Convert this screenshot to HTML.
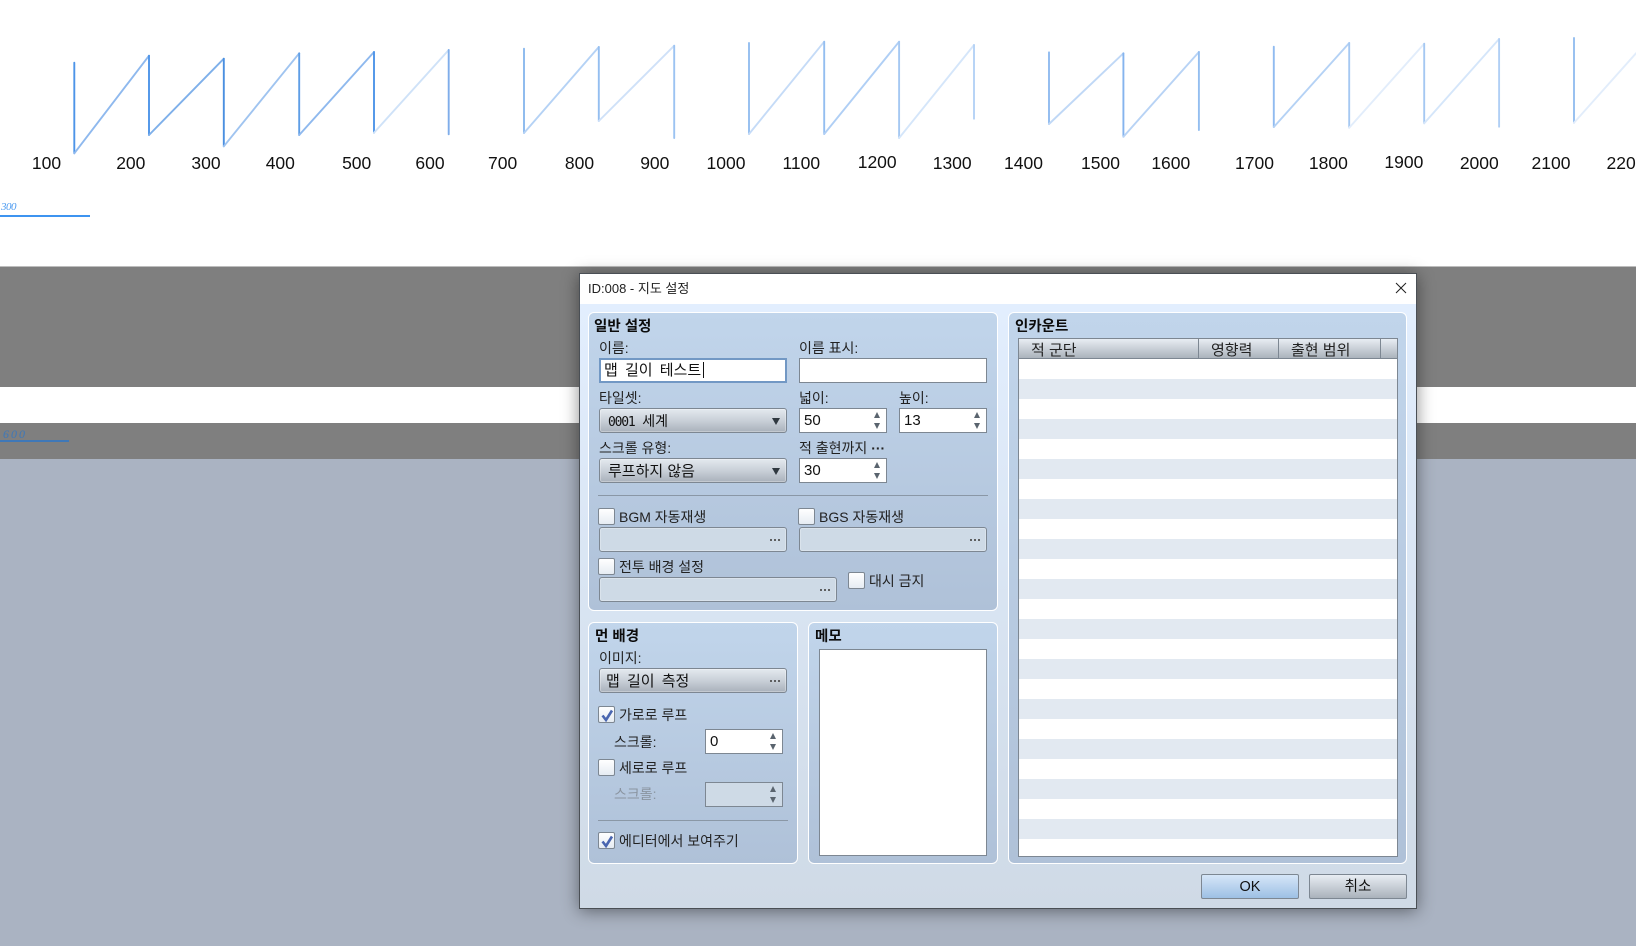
<!DOCTYPE html>
<html lang="ko"><head><meta charset="utf-8"><title>ID:008 - 지도 설정</title>
<style>
html,body{margin:0;padding:0}
body{width:1636px;height:946px;overflow:hidden;position:relative;background:#fff;font-family:"Liberation Sans","Noto Sans CJK KR",sans-serif;color:#1c1c1c}
div,span,svg{box-sizing:border-box}
.a{position:absolute}
.n{position:absolute;font-size:17.5px;line-height:20px;height:20px;width:60px;text-align:center;color:#111;filter:blur(.25px)}
.t{position:absolute;font-size:14px;line-height:20px;height:20px;white-space:nowrap;color:#222}
.b{font-weight:700;font-size:14.5px;color:#0c0c0c}
.p{position:absolute;border:1px solid #fff;border-radius:6px;background:linear-gradient(#c1d5eb,#afc1d8);overflow:hidden}
.i{position:absolute;background:#fff;border:1px solid #7d8792;height:25px}
.c{position:absolute;height:25px;border:1px solid #7d8792;border-radius:3px;background:linear-gradient(#e4e9ef 0,#c9d0d8 50%,#a9b1bb 100%);box-shadow:inset 0 0 0 1px rgba(255,255,255,.3)}
.f{position:absolute;height:25px;border:1px solid #7d8792;border-radius:3px;background:#cedae6;box-shadow:inset 0 0 0 1px rgba(255,255,255,.25)}
.cb{position:absolute;width:17px;height:17px;border:1px solid #7d8792;border-radius:2px;background:linear-gradient(#fff,#e6ecf3)}
.cb svg{position:absolute;left:1px;top:1px}
.up,.dn,.ar{position:absolute;width:0;height:0;border-left:3.5px solid transparent;border-right:3.5px solid transparent}
.up{border-bottom:6px solid #5a646e}
.dn{border-top:6px solid #5a646e}
.ar{border-left-width:4px;border-right-width:4px;border-top:7px solid #2f3840}
.d{position:absolute;width:10px;height:2px;background:radial-gradient(circle at 1px 1px,#555 1px,transparent 1.2px) 0 0/4px 2px repeat-x}
.sep{position:absolute;height:1px;background:#8a97a6}
.h{position:absolute;top:0;height:100%;width:1px;background:#7d8792}
.btn{position:absolute;height:25px;border:1px solid #7d8792;border-radius:2px;text-align:center;line-height:25px;font-size:14.5px;color:#111}
</style></head><body>
<svg class="a" style="left:0;top:0;filter:blur(.3px)" width="1636" height="266" fill="none" stroke-linecap="round">
<g stroke-width="1.9">
<path stroke="#4d94e8" d="M74.3 62.7V153.3"/><path stroke="#8fb9ee" d="M74.3 153.3L149 55.7"/>
<path stroke="#4d94e8" d="M149 55.7V135"/><path stroke="#7fb0ea" d="M149 135L223.8 58.7"/>
<path stroke="#4a8fe0" d="M223.8 58.7V146.3"/><path stroke="#a0c4f0" d="M223.8 146.3L299.2 53.3"/>
<path stroke="#5f9ee6" d="M299.2 53.3V135"/><path stroke="#8fb9ee" d="M299.2 135L374 52"/>
<path stroke="#4d94e8" d="M374 52V132.7"/><path stroke="#cfe2f8" d="M374 132.7L448.7 50"/>
<path stroke="#7fadea" d="M448.7 50V134.3"/>
<path stroke="#8ab8ee" d="M524 48.7V133"/><path stroke="#b5d2f5" d="M524 133L598.8 47"/>
<path stroke="#94bef0" d="M598.8 47V121"/><path stroke="#cfe1f8" d="M598.8 121L674.2 45.7"/>
<path stroke="#9cc3f2" d="M674.2 45.7V138"/>
<path stroke="#94bef0" d="M749 43V134"/><path stroke="#c5dbf7" d="M749 134L824.2 41.7"/>
<path stroke="#94bef0" d="M824.2 41.7V134"/><path stroke="#b0cff5" d="M824.2 134L899.1 41.7"/>
<path stroke="#a5c8f2" d="M899.1 41.7V138"/><path stroke="#d5e6fa" d="M899.1 138L974 45"/>
<path stroke="#b5d2f5" d="M974 45V118.7"/>
<path stroke="#90bbf0" d="M1049 52.3V124"/><path stroke="#c0d8f6" d="M1049 124L1123.4 53.3"/>
<path stroke="#85b4ee" d="M1123.4 53.3V136.7"/><path stroke="#b8d3f5" d="M1123.4 136.7L1198.9 52"/>
<path stroke="#94bef0" d="M1198.9 52V130"/>
<path stroke="#90bbf0" d="M1273.8 46.7V127"/><path stroke="#b5d2f5" d="M1273.8 127L1349.2 43"/>
<path stroke="#a5c8f2" d="M1349.2 43V127.7"/><path stroke="#e2edfb" d="M1349.2 127.7L1424.2 43.7"/>
<path stroke="#a5c8f2" d="M1424.2 43.7V123.3"/><path stroke="#d5e6fa" d="M1424.2 123.3L1499.1 39"/>
<path stroke="#b0cff5" d="M1499.1 39V126.7"/>
<path stroke="#94bef0" d="M1574 38V122.7"/><path stroke="#e2edfb" d="M1574 122.7L1636 53.3"/>
</g></svg>
<div class="n" style="left:16.5px;top:153px">100</div><div class="n" style="left:100.8px;top:153px">200</div><div class="n" style="left:176px;top:153px">300</div><div class="n" style="left:250.3px;top:153px">400</div><div class="n" style="left:326.7px;top:153px">500</div><div class="n" style="left:400px;top:153px">600</div><div class="n" style="left:472.6px;top:153px">700</div><div class="n" style="left:549.5px;top:152.5px">800</div><div class="n" style="left:624.8px;top:152.5px">900</div><div class="n" style="left:696px;top:152.5px">1000</div><div class="n" style="left:771.3px;top:152.5px">1100</div><div class="n" style="left:847.2px;top:152px">1200</div><div class="n" style="left:922.2px;top:152.5px">1300</div><div class="n" style="left:993.5px;top:152.5px">1400</div><div class="n" style="left:1070.5px;top:152.5px">1500</div><div class="n" style="left:1140.8px;top:152.5px">1600</div><div class="n" style="left:1224.5px;top:152.5px">1700</div><div class="n" style="left:1298.4px;top:152.5px">1800</div><div class="n" style="left:1373.9px;top:152px">1900</div><div class="n" style="left:1449.3px;top:152.5px">2000</div><div class="n" style="left:1521px;top:152.5px">2100</div><div class="n" style="left:1596px;top:152.5px">2200</div>

<div class="a" style="left:1px;top:199px;font:italic 11px/16px 'Liberation Serif',serif;color:#4f9cf0;letter-spacing:-.5px">300</div>
<div class="a" style="left:0;top:215px;width:90px;height:2px;background:#3d94f0"></div>

<div class="a" style="left:0;top:266px;width:1636px;height:121px;background:#7f7f7f;border-top:1px solid #bdbdbd"></div>
<div class="a" style="left:0;top:423px;width:1636px;height:36px;background:#7f7f7f"></div>
<div class="a" style="left:0;top:459px;width:1636px;height:487px;background:#aab3c2"></div>
<div class="a" style="left:3px;top:427px;font:italic 12px/14px 'Liberation Serif',serif;color:#3f78b8;letter-spacing:2px">600</div>
<div class="a" style="left:0;top:440px;width:69px;height:1.5px;background:#3f78b8"></div>

<div class="a" style="left:579px;top:273px;width:838px;height:636px;border:1px solid #4a4f55;box-shadow:0 2px 16px rgba(0,0,0,.45);background:linear-gradient(#e3efff,#cfdae6)">
<div class="a" style="left:0;top:0;width:836px;height:30px;background:#fff"></div>
</div>
<div class="t" style="left:588px;top:279px;font-size:13px;color:#222">ID:008 - 지도 설정</div>
<svg class="a" style="left:1395px;top:282px" width="12" height="12" fill="none" stroke="#222" stroke-width="1"><path d="M1 1L11 11M11 1L1 11"/></svg>

<div class="p" style="left:588px;top:312px;width:410px;height:299px"></div>
<div class="p" style="left:588px;top:622px;width:210px;height:242px"></div>
<div class="p" style="left:808px;top:622px;width:190px;height:242px"></div>
<div class="p" style="left:1008px;top:312px;width:399px;height:552px"></div>

<div class="t b" style="left:594px;top:317px">일반 설정</div>
<div class="t" style="left:599px;top:338px">이름:</div>
<div class="i" style="left:599px;top:358px;width:188px;border:2px solid #7298c4"></div>
<div class="t" style="left:604px;top:361px;font-size:15px;word-spacing:3px;color:#111">맵 길이 테스트</div>
<div class="a" style="left:703px;top:362px;width:1px;height:16px;background:#111"></div>
<div class="t" style="left:799px;top:338px">이름 표시:</div>
<div class="i" style="left:799px;top:358px;width:188px"></div>

<div class="t" style="left:599px;top:388px">타일셋:</div>
<div class="c" style="left:599px;top:408px;width:188px"></div>
<div class="t" style="left:608px;top:411px;color:#111"><span style="font:13px/20px 'DejaVu Sans Mono',monospace;letter-spacing:-1.2px">0001</span>&nbsp; 세계</div>
<div class="ar" style="left:772px;top:418px"></div>
<div class="t" style="left:799px;top:388px">넓이:</div>
<div class="i" style="left:799px;top:408px;width:88px"></div>
<div class="t" style="left:804px;top:411px;font-size:15px;color:#111">50</div>
<div class="up" style="left:874px;top:412px"></div><div class="dn" style="left:874px;top:423px"></div>
<div class="t" style="left:899px;top:388px">높이:</div>
<div class="i" style="left:899px;top:408px;width:88px"></div>
<div class="t" style="left:904px;top:411px;font-size:15px;color:#111">13</div>
<div class="up" style="left:974px;top:412px"></div><div class="dn" style="left:974px;top:423px"></div>

<div class="t" style="left:599px;top:438px">스크롤 유형:</div>
<div class="c" style="left:599px;top:458px;width:188px"></div>
<div class="t" style="left:608px;top:462px;color:#111;font-size:15px">루프하지 않음</div>
<div class="ar" style="left:772px;top:468px"></div>
<div class="t" style="left:799px;top:438px">적 출현까지 <b>···</b></div>
<div class="i" style="left:799px;top:458px;width:88px"></div>
<div class="t" style="left:804px;top:461px;font-size:15px;color:#111">30</div>
<div class="up" style="left:874px;top:462px"></div><div class="dn" style="left:874px;top:473px"></div>

<div class="sep" style="left:598px;top:495px;width:390px"></div>

<div class="cb" style="left:598px;top:508px"></div>
<div class="t" style="left:619px;top:507px">BGM 자동재생</div>
<div class="f" style="left:599px;top:527px;width:188px"></div><div class="d" style="left:770px;top:539px"></div>
<div class="cb" style="left:798px;top:508px"></div>
<div class="t" style="left:819px;top:507px">BGS 자동재생</div>
<div class="f" style="left:799px;top:527px;width:188px"></div><div class="d" style="left:970px;top:539px"></div>

<div class="cb" style="left:598px;top:558px"></div>
<div class="t" style="left:619px;top:557px">전투 배경 설정</div>
<div class="f" style="left:599px;top:577px;width:238px"></div><div class="d" style="left:820px;top:589px"></div>
<div class="cb" style="left:848px;top:572px"></div>
<div class="t" style="left:869px;top:571px">대시 금지</div>

<div class="t b" style="left:595px;top:627px">먼 배경</div>
<div class="t" style="left:599px;top:648px">이미지:</div>
<div class="c" style="left:599px;top:668px;width:188px"></div>
<div class="t" style="left:606px;top:672px;font-size:15px;word-spacing:3px;color:#111">맵 길이 측정</div>
<div class="d" style="left:770px;top:680px"></div>

<div class="cb" style="left:598px;top:706px"><svg width="15" height="15" fill="none" stroke="#4a66b0" stroke-width="2.6"><path d="M2.5 7.5L6 12L12 2.5"/></svg></div>
<div class="t" style="left:619px;top:705px">가로로 루프</div>
<div class="t" style="left:614px;top:732px">스크롤:</div>
<div class="i" style="left:705px;top:729px;width:78px"></div>
<div class="t" style="left:710px;top:732px;font-size:15px;color:#111">0</div>
<div class="up" style="left:770px;top:733px"></div><div class="dn" style="left:770px;top:744px"></div>

<div class="cb" style="left:598px;top:759px"></div>
<div class="t" style="left:619px;top:758px">세로로 루프</div>
<div class="t" style="left:614px;top:784px;color:#8a94a0">스크롤:</div>
<div class="i" style="left:705px;top:782px;width:78px;background:#cedae6"></div>
<div class="up" style="left:770px;top:786px"></div><div class="dn" style="left:770px;top:797px"></div>

<div class="sep" style="left:598px;top:820px;width:190px"></div>
<div class="cb" style="left:598px;top:832px"><svg width="15" height="15" fill="none" stroke="#4a66b0" stroke-width="2.6"><path d="M2.5 7.5L6 12L12 2.5"/></svg></div>
<div class="t" style="left:619px;top:831px">에디터에서 보여주기</div>

<div class="t b" style="left:815px;top:627px">메모</div>
<div class="i" style="left:819px;top:649px;width:168px;height:207px"></div>

<div class="t b" style="left:1015px;top:317px">인카운트</div>
<div class="a" style="left:1018px;top:338px;width:380px;height:519px;border:1px solid #7d8792;background:repeating-linear-gradient(#fff 0,#fff 20px,#e2e9f1 20px,#e2e9f1 40px) 0 20px no-repeat;overflow:hidden">
<div class="a" style="left:0;top:0;width:378px;height:20px;background:linear-gradient(#e8edf3,#abb3bc);border-bottom:1px solid #7d8792">
<div class="h" style="left:179px"></div><div class="h" style="left:259px"></div><div class="h" style="left:361px"></div>
</div></div>
<div class="t" style="left:1031px;top:341px;font-size:15px">적 군단</div>
<div class="t" style="left:1211px;top:341px;font-size:15px">영향력</div>
<div class="t" style="left:1291px;top:341px;font-size:15px">출현 범위</div>

<div class="btn" style="left:1201px;top:874px;width:98px;background:linear-gradient(#d6e6f8,#9dc0e4)">OK</div>
<div class="btn" style="left:1309px;top:874px;width:98px;background:linear-gradient(#e8edf3,#aab2bb)">취소</div>
</body></html>
